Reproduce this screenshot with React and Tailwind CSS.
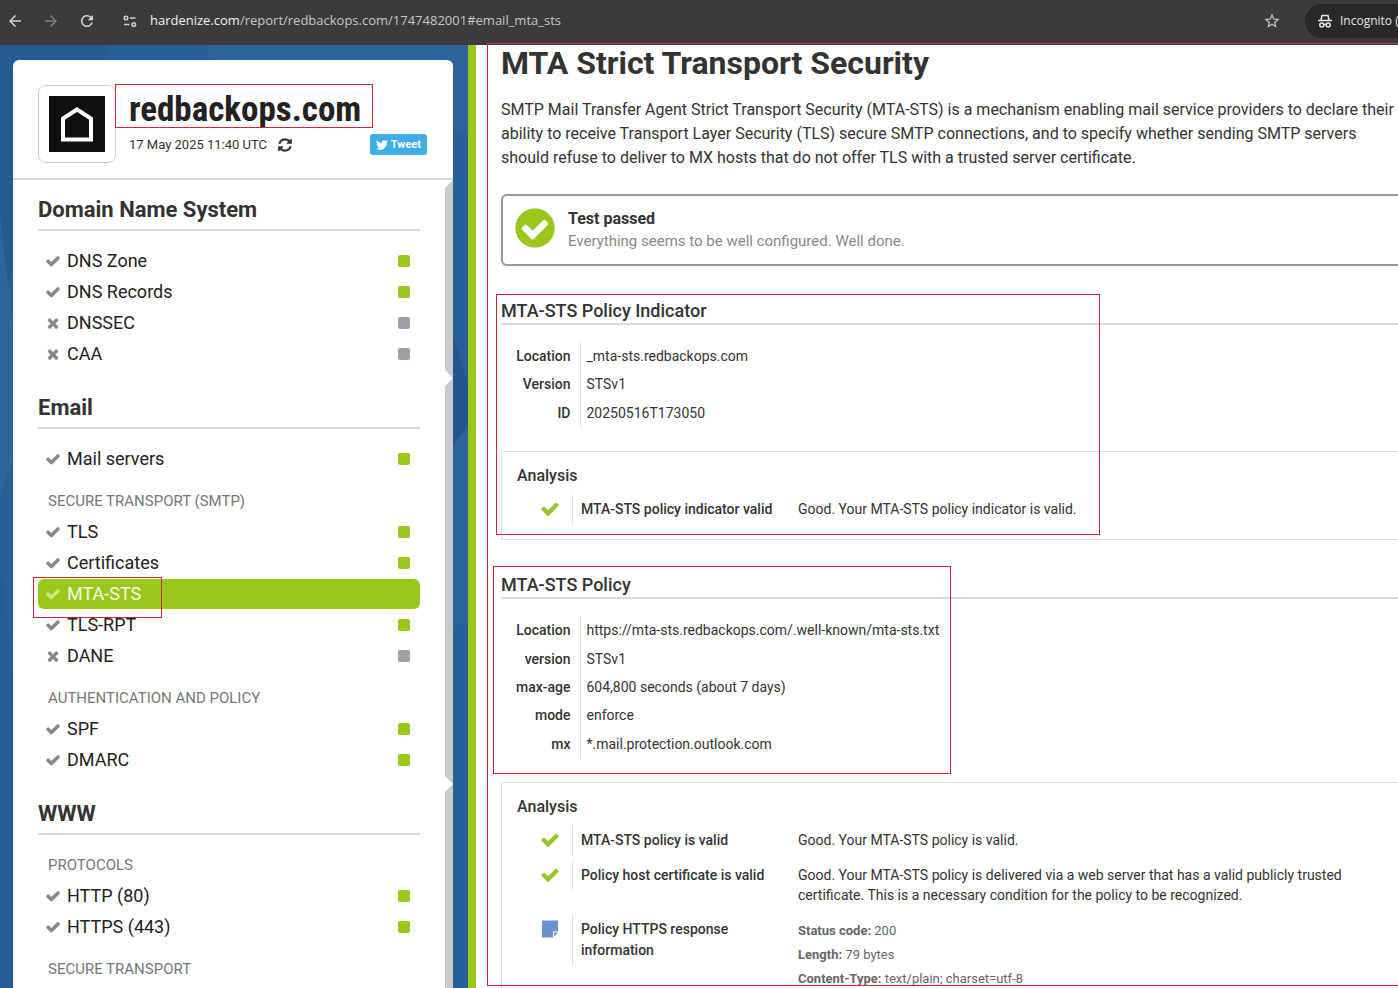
import { FaTwitter } from "react-icons/fa";
import { MdArrowBack, MdArrowForward, MdRefresh, MdStarOutline } from "react-icons/md";

function Glyph({ d, className }) {
  return (
    <svg viewBox="0 0 1792 1792" fill="currentColor" aria-hidden="true" className={className}>
      <path d={d} />
    </svg>
  );
}

const CHECK =
  "M1671 566q0 40-28 68l-724 724-136 136q-28 28-68 28t-68-28l-136-136-362-362q-28-28-28-68t28-68l136-136q28-28 68-28t68 28l294 295 656-657q28-28 68-28t68 28l136 136q28 28 28 68z";
const TIMES =
  "M1490 1322q0 40-28 68l-136 136q-28 28-68 28t-68-28l-294-294-294 294q-28 28-68 28t-68-28l-136-136q-28-28-28-68t28-68l294-294-294-294q-28-28-28-68t28-68l136-136q28-28 68-28t68 28l294 294 294-294q28-28 68-28t68 28l136 136q28 28 28 68t-28 68l-294 294 294 294q28 28 28 68z";
const REFRESH =
  "M1639 1056q0 5-1 7-64 268-268 434.5t-478 166.5q-146 0-282.5-55t-243.5-157l-129 129q-19 19-45 19t-45-19-19-45v-448q0-26 19-45t45-19h448q26 0 45 19t19 45-19 45l-137 137q71 66 161 102t187 36q134 0 250-65t186-179q11-17 53-117 8-23 30-23h192q13 0 22.5 9.5t9.5 22.5zm25-800v448q0 26-19 45t-45 19h-448q-26 0-45-19t-19-45 19-45l138-138q-148-137-349-137-134 0-250 65t-186 179q-11 17-53 117-8 23-30 23h-199q-13 0-22.5-9.5t-9.5-22.5v-7q65-268 270-434.5t480-166.5q146 0 284 55.5t245 156.5l130-129q19-19 45-19t45 19 19 45z";
const CHECK_CIRCLE =
  "M1412 734q0-28-18-46l-91-90q-19-19-45-19t-45 19l-408 407-226-226q-19-19-45-19t-45 19l-91 90q-18 18-18 46 0 27 18 45l362 362q19 19 45 19 27 0 46-19l543-543q18-18 18-45zm252 162q0 209-103 385.5t-279.5 279.5-385.5 103-385.5-103-279.5-279.5-103-385.5 103-385.5 279.5-279.5 385.5-103 385.5 103 279.5 279.5 103 385.5z";

const sections = [
  {
    title: "Domain Name System",
    groups: [
      {
        items: [
          { label: "DNS Zone", ok: true },
          { label: "DNS Records", ok: true },
          { label: "DNSSEC", ok: false },
          { label: "CAA", ok: false },
        ],
      },
    ],
  },
  {
    title: "Email",
    groups: [
      { items: [{ label: "Mail servers", ok: true }] },
      {
        name: "SECURE TRANSPORT (SMTP)",
        items: [
          { label: "TLS", ok: true },
          { label: "Certificates", ok: true },
          { label: "MTA-STS", ok: true, active: true },
          { label: "TLS-RPT", ok: true },
          { label: "DANE", ok: false },
        ],
      },
      {
        name: "AUTHENTICATION AND POLICY",
        items: [
          { label: "SPF", ok: true },
          { label: "DMARC", ok: true },
        ],
      },
    ],
  },
  {
    title: "WWW",
    groups: [
      {
        name: "PROTOCOLS",
        items: [
          { label: "HTTP (80)", ok: true },
          { label: "HTTPS (443)", ok: true },
        ],
      },
      { name: "SECURE TRANSPORT", items: [] },
    ],
  },
];

/* Red outline laid over a region to call attention to it. */
function Outline({ className }) {
  return <span aria-hidden="true" className={"pointer-events-none absolute z-10 border border-[#c42b32] " + className} />;
}

function BrowserBar() {
  return (
    <header className="flex h-[45px] shrink-0 items-center bg-[#3b3b3b] pb-[3px] font-['Open_Sans',sans-serif] text-[13px] text-[#c7c7c7]">
      <div className="flex items-center gap-[18px] pl-[6px]">
        <button aria-label="Back" className="text-[#d5d5d5]"><MdArrowBack className="size-[18px]" /></button>
        <button aria-label="Forward" className="text-[#808080]"><MdArrowForward className="size-[18px]" /></button>
        <button aria-label="Reload" className="text-[#d5d5d5]"><MdRefresh className="size-[18px]" /></button>
      </div>
      <button aria-label="View site information" className="ml-[27px]">
        <svg viewBox="0 0 14 14" className="size-[14px]" fill="none" stroke="#d0d0d0" strokeWidth="1.5" aria-hidden="true">
          <circle cx="3" cy="4" r="1.8" />
          <path d="M7 4h5.5M1 10.5h5.5" />
          <circle cx="10.8" cy="10.5" r="1.8" />
        </svg>
      </button>
      <p className="min-w-0 grow truncate pl-[13px]">
        <span className="text-[#f0f0f0]">hardenize.com</span>/report/redbackops.com/1747482001#email_mta_sts
      </p>
      <button aria-label="Bookmark this tab" className="mr-6 shrink-0"><MdStarOutline className="size-[18px]" /></button>
      <div className="flex h-[34px] w-[93px] shrink-0 items-center gap-[7px] rounded-l-full bg-[#282828] pl-3 text-xs whitespace-nowrap text-[#e6e6e6]">
        <svg viewBox="0 0 16 16" className="size-4 shrink-0" fill="none" stroke="currentColor" strokeWidth="1.5" aria-hidden="true">
          <path d="M1 7.500h14M4 7l1-4.500h6L12 7" />
          <circle cx="4.800" cy="12" r="2" />
          <circle cx="11.200" cy="12" r="2" />
          <path d="M6.800 11.600q1.200-.8 2.400 0" />
        </svg>
        <span>Incognito (</span>
      </div>
    </header>
  );
}

function NavItem({ item }) {
  const { label, ok, active } = item;
  return (
    <li className="relative">
      <a
        href={"#" + label}
        className={
          "mb-px flex h-[30px] items-center rounded-md px-[7px] text-lg " +
          (active ? "bg-[#9ac71c] text-[#f6fbe4]" : "text-[#222]")
        }
      >
        <Glyph
          d={ok ? CHECK : TIMES}
          className={"mr-[6px] size-4 " + (active ? "text-[#cfe58a]" : "text-[#888]")}
        />
        <span className="grow">{label}</span>
        {!active && (
          <span className={"mr-[3px] size-3 rounded-xs " + (ok ? "bg-[#9ac71c]" : "bg-[#a09fa7]")} />
        )}
      </a>
      {active && <Outline className="-top-[2px] -left-[5px] h-[41px] w-[129px]" />}
    </li>
  );
}

function Sidebar() {
  return (
    <aside className="relative flex w-[476px] shrink-0 flex-col overflow-hidden border-r-8 border-[#9ac71c] bg-[#285f96] pt-[15px] pr-[15px] pl-[13px]">
      <svg viewBox="0 0 468 943" preserveAspectRatio="none" aria-hidden="true" className="absolute inset-0 size-full">
        <path d="M0 0h110L0 260z" fill="#255b91" />
        <path d="M205 0h263v90L210 15z" fill="#2c6398" />
        <path d="M0 170l14 120v120L0 450z" fill="#2f6599" />
        <path d="M453 290l15 50v60l-15 5z" fill="#22568b" />
        <path d="M453 400l15-20v200h-15z" fill="#2c6499" />
        <path d="M0 520l14 120v303H0z" fill="#235d94" />
      </svg>
      <div className="relative flex grow flex-col rounded-t-md bg-white">
        <div className="flex border-b-2 border-[#d8dada] pt-[25px] pr-[26px] pb-[15px] pl-[25px]">
          <div className="flex size-[78px] shrink-0 items-center justify-center rounded-lg border border-[#ccc]">
            <svg viewBox="0 0 56 56" className="size-14" role="img" aria-label="Site logo">
              <path fill="#101010" d="M0 0h56v56H0z" />
              <path d="M14 43.500V22.500L28 13.500l14 9v21z" fill="none" stroke="#fff" strokeWidth="4" />
            </svg>
          </div>
          <div className="min-w-0 grow pl-[13px]">
            <div className="relative">
              <h1 className="font-['Roboto_Condensed',Roboto,sans-serif] text-[35px] leading-[49px] font-bold text-[#222]">
                redbackops.com
              </h1>
              <Outline className="-top-px -left-[14px] h-[44px] w-[258px]" />
            </div>
            <div className="flex items-center">
              <span className="text-[13px]">17 May 2025 11:40 UTC</span>
              <button aria-label="Refresh report" className="ml-[10px]"><Glyph d={REFRESH} className="size-4" /></button>
              <a href="#tweet" className="ml-auto flex h-[21px] items-center gap-[3px] rounded-[3px] bg-[#3faee8] px-[6px] text-[11px] leading-[21px] font-bold text-white">
                <FaTwitter className="size-3" />
                Tweet
              </a>
            </div>
          </div>
        </div>
        <nav className="flex grow flex-col">
          {sections.map((s) => (
            <section key={s.title} className="flex last:-mb-3 last:grow">
              <div className="grow pr-[25px] pb-2 pl-[25px]">
                <h2 className="border-b-2 border-[#d8dada] pt-[15px] pb-1 text-[22px] leading-[30px] font-bold">
                  {s.title}
                </h2>
                <div className="flex flex-col gap-[11px] pt-[15px]">
                  {s.groups.map((g, i) => (
                    <div key={i}>
                      {g.name && (
                        <h3 className="pl-[10px] text-[15px] leading-[31px] text-[#777]">{g.name}</h3>
                      )}
                      <ul>
                        {g.items.map((item) => (
                          <NavItem key={item.label} item={item} />
                        ))}
                      </ul>
                    </div>
                  ))}
                </div>
              </div>
              <div className="w-2 bg-[#c9cbcb] [clip-path:polygon(0_8px,100%_0,100%_100%,0_calc(100%-8px))]" />
            </section>
          ))}
        </nav>
      </div>
    </aside>
  );
}

function Facts({ rows, className }) {
  return (
    <table className={"text-sm " + className}>
      <tbody>
        {rows.map(([k, v]) => (
          <tr key={k}>
            <th scope="row" className="w-[79px] border-r border-[#ddd] pr-[9px] text-right font-medium">{k}</th>
            <td className="pl-[6px]">{v}</td>
          </tr>
        ))}
      </tbody>
    </table>
  );
}

function NoteIcon() {
  return (
    <svg viewBox="0 0 16 17" className="h-5 w-4" aria-hidden="true">
      <path d="M0 0h16v11h-5v6H0z" fill="#6d8ecf" />
      <path d="M12 12h4l-4 4z" fill="#6d8ecf" />
    </svg>
  );
}

function Finding({ icon, title, children }) {
  return (
    <div className="flex text-sm leading-5">
      <div className="flex w-[70px] shrink-0 justify-end pt-1 pr-3">
        <span className="flex w-5 justify-center">
          {icon || <Glyph d={CHECK} className="size-5 text-[#97c52b]" />}
        </span>
      </div>
      <h5 className="w-[226px] shrink-0 self-start border-l border-[#ddd] py-1 pr-6 pl-2 leading-[21px] font-medium">
        {title}
      </h5>
      <div className="min-w-0 grow py-1 pr-9">{children}</div>
    </div>
  );
}

function Analysis({ className, children }) {
  return (
    <div className={"border border-r-0 border-[#ddd] pt-3 " + className}>
      <h4 className="pb-2 pl-[15px] text-base leading-[23px] font-medium">Analysis</h4>
      <div className="flex flex-col gap-[6px]">{children}</div>
    </div>
  );
}

function SectionTitle({ children }) {
  return <h3 className="border-b-2 border-[#d8dada] pt-[3px] text-lg leading-6 font-medium">{children}</h3>;
}

export default function App() {
  return (
    <div className="flex h-screen flex-col overflow-hidden bg-white font-[Roboto,sans-serif] text-[#333]">
      <BrowserBar />
      <div className="relative flex min-h-0 grow">
        <Sidebar />
        <main className="min-w-0 grow overflow-hidden pl-[25px]">
          <h2 className="text-[32px] leading-[37px] font-bold">MTA Strict Transport Security</h2>
          <p className="pt-4 text-base leading-6">
            SMTP Mail Transfer Agent Strict Transport Security (MTA-STS) is a mechanism enabling mail service providers to
            declare their ability to receive Transport Layer Security (TLS) secure SMTP connections, and to specify
            whether sending SMTP servers should refuse to deliver to MX hosts that do not offer TLS with a trusted server
            certificate.
          </p>
          <div className="mt-6 flex h-[72px] items-center rounded-l-md border-2 border-r-0 border-[#999] pl-[9px]">
            <Glyph d={CHECK_CIRCLE} className="mb-1 size-[46px] shrink-0 text-[#9ac71c]" />
            <div className="pl-[10px]">
              <h3 className="text-base leading-[23px] font-bold">Test passed</h3>
              <p className="text-[15px] leading-[23px] text-[#888]">Everything seems to be well configured. Well done.</p>
            </div>
          </div>

          <section className="relative mt-[30px]">
            <SectionTitle>MTA-STS Policy Indicator</SectionTitle>
            <Facts
              className="mt-[17px] h-[85px]"
              rows={[
                ["Location", "_mta-sts.redbackops.com"],
                ["Version", "STSv1"],
                ["ID", "20250516T173050"],
              ]}
            />
            <Analysis className="mt-6 pb-[15px]">
              <Finding title="MTA-STS policy indicator valid">Good. Your MTA-STS policy indicator is valid.</Finding>
            </Analysis>
            <Outline className="-top-[2px] -left-[5px] h-[241px] w-[604px]" />
          </section>

          <section className="relative mt-[30px]">
            <SectionTitle>MTA-STS Policy</SectionTitle>
            <Facts
              className="mt-[17px] h-[142px]"
              rows={[
                ["Location", "https://mta-sts.redbackops.com/.well-known/mta-sts.txt"],
                ["version", "STSv1"],
                ["max-age", "604,800 seconds (about 7 days)"],
                ["mode", "enforce"],
                ["mx", "*.mail.protection.outlook.com"],
              ]}
            />
            <Analysis className="mt-6 pb-10">
              <Finding title="MTA-STS policy is valid">Good. Your MTA-STS policy is valid.</Finding>
              <Finding title="Policy host certificate is valid">
                Good. Your MTA-STS policy is delivered via a web server that has a valid publicly trusted certificate.
                This is a necessary condition for the policy to be recognized.
              </Finding>
              <Finding icon={<NoteIcon />} title="Policy HTTPS response information">
                <div className="text-[13px] leading-6 text-[#666]">
                  <p><b>Status code:</b> 200</p>
                  <p><b>Length:</b> 79 bytes</p>
                  <p><b>Content-Type:</b> text/plain; charset=utf-8</p>
                </div>
              </Finding>
            </Analysis>
            <Outline className="-top-1 -left-2 h-[208px] w-[458px]" />
          </section>
        </main>
        <Outline className="-top-[2px] right-0 bottom-[2px] left-[487px] border-r-0" />
      </div>
    </div>
  );
}
